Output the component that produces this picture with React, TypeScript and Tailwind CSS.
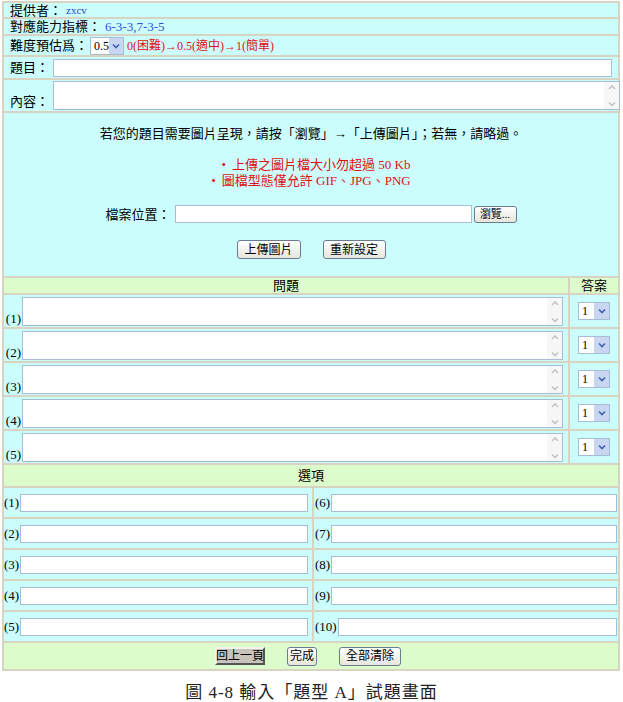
import React from "react";

const font = "font-['Liberation_Serif','Noto_Sans_CJK_TC',serif]";

function Chevron({ up, color = "#4060b0" }: { up?: boolean; color?: string }) {
  return (
    <svg width="8" height="6" viewBox="0 0 8 6">
      <path
        d={up ? "M1 5 L4 2 L7 5" : "M1 1.5 L4 4.5 L7 1.5"}
        fill="none"
        stroke={color}
        strokeWidth="1.6"
      />
    </svg>
  );
}

function Select({ value, w }: { value: string; w: string }) {
  return (
    <div className={`flex h-[18px] shrink-0 border border-[#a8bcd4] bg-white ${w}`}>
      <span className="flex-1 pl-[3px] text-[12px] leading-[16px]">{value}</span>
      <span className="flex w-[15px] items-center justify-center bg-[#c8d6f2]">
        <Chevron />
      </span>
    </div>
  );
}

function TextArea({ w, h }: { w: string; h: string }) {
  return (
    <div className={`flex shrink-0 border border-[#a8bcd4] bg-white ${w} ${h}`}>
      <div className="flex-1" />
      <div className="flex w-[15px] flex-col items-center justify-between bg-[#f7f7f7] py-[2px]">
        <Chevron up color="#c4c4c4" />
        <Chevron color="#c4c4c4" />
      </div>
    </div>
  );
}

function Input({ w }: { w: string }) {
  return <div className={`h-[18px] border border-[#a8bcd4] bg-white ${w}`} />;
}

function Btn({ children, w }: { children: React.ReactNode; w: string }) {
  return (
    <div
      className={`flex h-[19px] shrink-0 items-center justify-center whitespace-nowrap rounded-[3px] border border-[#6c7a94] bg-gradient-to-b from-white to-[#e6e6dc] text-[12px] leading-none ${w}`}
    >
      {children}
    </div>
  );
}

export default function App() {
  const rowCls = "bg-[#ccfdfd]";
  return (
    <div className={`h-[702px] w-[623px] bg-white pt-[1px] text-[13px] text-black ${font}`}>
      <div className="ml-[2px] flex w-[618px] flex-col gap-[2px] border-2 border-[#d9d3c1] bg-[#d9d3c1]">
        {/* 提供者 */}
        <div className={`${rowCls} flex h-[14px] items-center whitespace-nowrap pl-[6px] leading-none`}>
          提供者：<span className="ml-[4px] text-[11px] text-[#2f3fd0]">zxcv</span>
        </div>
        {/* 能力指標 */}
        <div className={`${rowCls} flex h-[15px] items-center whitespace-nowrap pl-[6px] leading-none`}>
          對應能力指標：<span className="ml-[4px] text-[#2f4fd8]">6-3-3,7-3-5</span>
        </div>
        {/* 難度 */}
        <div className={`${rowCls} flex h-[19px] items-center whitespace-nowrap pl-[6px] leading-none`}>
          難度預估爲：
          <Select value="0.5" w="ml-[2px] w-[34px]" />
          <span className="ml-[3px] text-[12px] text-[#e01010]">0(困難)→0.5(適中)→1(簡單)</span>
        </div>
        {/* 題目 */}
        <div className={`${rowCls} flex h-[21px] items-center whitespace-nowrap pl-[6px] leading-none`}>
          <span className="shrink-0">題目：</span>
          <Input w="ml-[4px] w-[559px] shrink-0" />
        </div>
        {/* 內容 */}
        <div className={`${rowCls} flex h-[31px] items-end whitespace-nowrap pb-[1px] pl-[6px] leading-none`}>
          <span className="shrink-0 pb-[2px]">內容：</span>
          <TextArea w="ml-[4px] w-[567px]" h="h-[29px]" />
        </div>
        {/* 圖片上傳 */}
        <div className={`${rowCls} flex h-[163px] flex-col items-center whitespace-nowrap pt-[14px] leading-none`}>
          <div>若您的題目需要圖片呈現，請按「瀏覽」→「上傳圖片」；若無，請略過。</div>
          <div className="mt-[18px] flex flex-col items-center gap-[3px] text-[#e01010]">
            <div className="ml-[10px]">
              <span className="mr-[6px]">•</span>上傳之圖片檔大小勿超過 50 Kb
            </div>
            <div>
              <span className="mr-[6px]">•</span>圖檔型態僅允許 GIF、JPG、PNG
            </div>
          </div>
          <div className="mt-[18px] flex items-center">
            <span>檔案位置：</span>
            <Input w="ml-[4px] w-[297px] h-[16px]" />
            <div className="ml-[2px] flex h-[17px] w-[43px] items-center justify-center rounded-[3px] border border-[#6c7a94] bg-gradient-to-b from-white to-[#e6e6dc] text-[11px]">
              瀏覽...
            </div>
          </div>
          <div className="mt-[17px] flex gap-[22px]">
            <Btn w="w-[64px]">上傳圖片</Btn>
            <Btn w="w-[63px]">重新設定</Btn>
          </div>
        </div>
        {/* 問題 header */}
        <div className="flex h-[15px] gap-[2px] leading-none">
          <div className="flex flex-1 items-center justify-center bg-[#dcfccb]">問題</div>
          <div className="flex w-[48px] items-center justify-center bg-[#dcfccb]">答案</div>
        </div>
        {[1, 2, 3, 4, 5].map((n) => (
          <div key={n} className="flex h-[32px] gap-[2px] leading-none">
            <div className={`${rowCls} flex flex-1 items-end pb-[1px]`}>
              <span className="w-[17px] shrink-0 pb-[1px] text-right">({n})</span>
              <TextArea w="ml-[1px] w-[541px]" h="h-[29px]" />
            </div>
            <div className={`${rowCls} flex w-[48px] items-center justify-center`}>
              <Select value="1" w="w-[32px]" />
            </div>
          </div>
        ))}
        {/* 選項 header */}
        <div className="flex h-[21px] items-center justify-center bg-[#dcfccb] leading-none">選項</div>
        {[1, 2, 3, 4, 5].map((n) => (
          <div key={n} className="flex h-[29px] gap-[2px] leading-none">
            <div className={`${rowCls} flex w-[308px] items-center`}>
              <span className="w-[15px] shrink-0 text-right">({n})</span>
              <Input w="ml-[1px] w-[288px]" />
            </div>
            <div className={`${rowCls} flex flex-1 items-center pl-[1px]`}>
              <span className="mr-[1px] shrink-0">({n + 5})</span>
              <Input w="flex-1 mr-[1px]" />
            </div>
          </div>
        ))}
        {/* 底部按鈕 */}
        <div className="flex h-[26px] items-center justify-center gap-[22px] bg-[#dcfccb] pr-[6px] leading-none">
          <div className="flex h-[18px] w-[50px] shrink-0 items-center justify-center whitespace-nowrap border-2 border-b-[#555] border-l-[#f4f4f0] border-r-[#555] border-t-[#f4f4f0] bg-[#c8c4bc] text-[12px]">
            回上一頁
          </div>
          <Btn w="w-[30px]">完成</Btn>
          <Btn w="w-[62px]">全部清除</Btn>
        </div>
      </div>
      <div className="mt-[12px] text-center text-[17px] leading-[20px] tracking-[1px] text-[#222]">
        圖 4-8 輸入「題型 A」試題畫面
      </div>
    </div>
  );
}
